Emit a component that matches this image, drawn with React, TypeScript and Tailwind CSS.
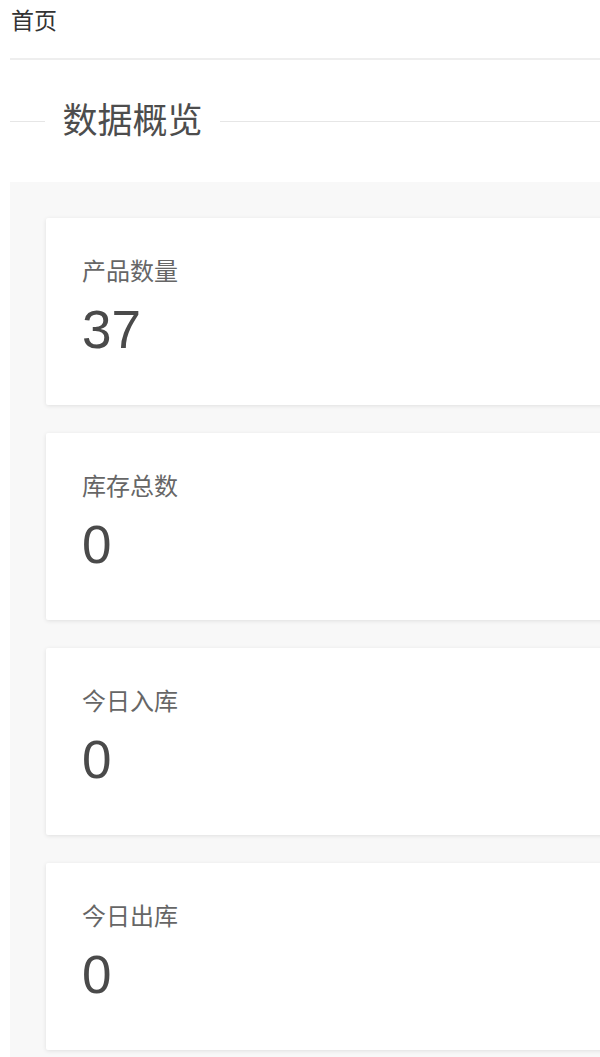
import React from 'react';

interface Stat {
  label: string;
  value: number;
}

const stats: Stat[] = [
  { label: '产品数量', value: 37 },
  { label: '库存总数', value: 0 },
  { label: '今日入库', value: 0 },
  { label: '今日出库', value: 0 },
];

const font = "font-['Liberation_Sans','Noto_Sans_CJK_SC',sans-serif]";

const StatCard: React.FC<{ stat: Stat }> = ({ stat }) => (
  <div className="h-[187px] bg-white rounded-[2px] shadow-[0_1px_4px_rgba(0,0,0,0.1)] pl-[36px] pt-[41px]">
    <div className="text-[24px] leading-[25px] text-[#666]">{stat.label}</div>
    <div className="mt-[19px] text-[53px] leading-[53px] text-[#4a4a4a]">{stat.value}</div>
  </div>
);

const App: React.FC = () => {
  return (
    <div className={`w-[600px] h-[1057px] overflow-hidden bg-white ${font}`}>
      <div className="w-[680px]">
        {/* breadcrumb */}
        <div className="h-[58px] pl-[11px] pt-[10px]">
          <span className="text-[23px] leading-[23px] text-[#333]">首页</span>
        </div>
        <div className="ml-[10px] h-[2px] bg-[#eeeeee]" />

        {/* field title */}
        <div className="mt-[31px] ml-[10px] h-[60px] flex items-center">
          <div className="w-[35px] h-px bg-[#e6e6e6]" />
          <div className="px-[17.5px] text-[35px] leading-[40px] text-[#4d4d4d]">数据概览</div>
          <div className="flex-1 h-px bg-[#e6e6e6]" />
        </div>

        {/* stats */}
        <div className="mt-[31px] ml-[10px] bg-[#f8f8f8] pt-[36px] pl-[36px] pb-[40px] flex flex-col gap-[28px]">
          {stats.map((s) => (
            <StatCard key={s.label} stat={s} />
          ))}
        </div>
      </div>
    </div>
  );
};

export default App;
